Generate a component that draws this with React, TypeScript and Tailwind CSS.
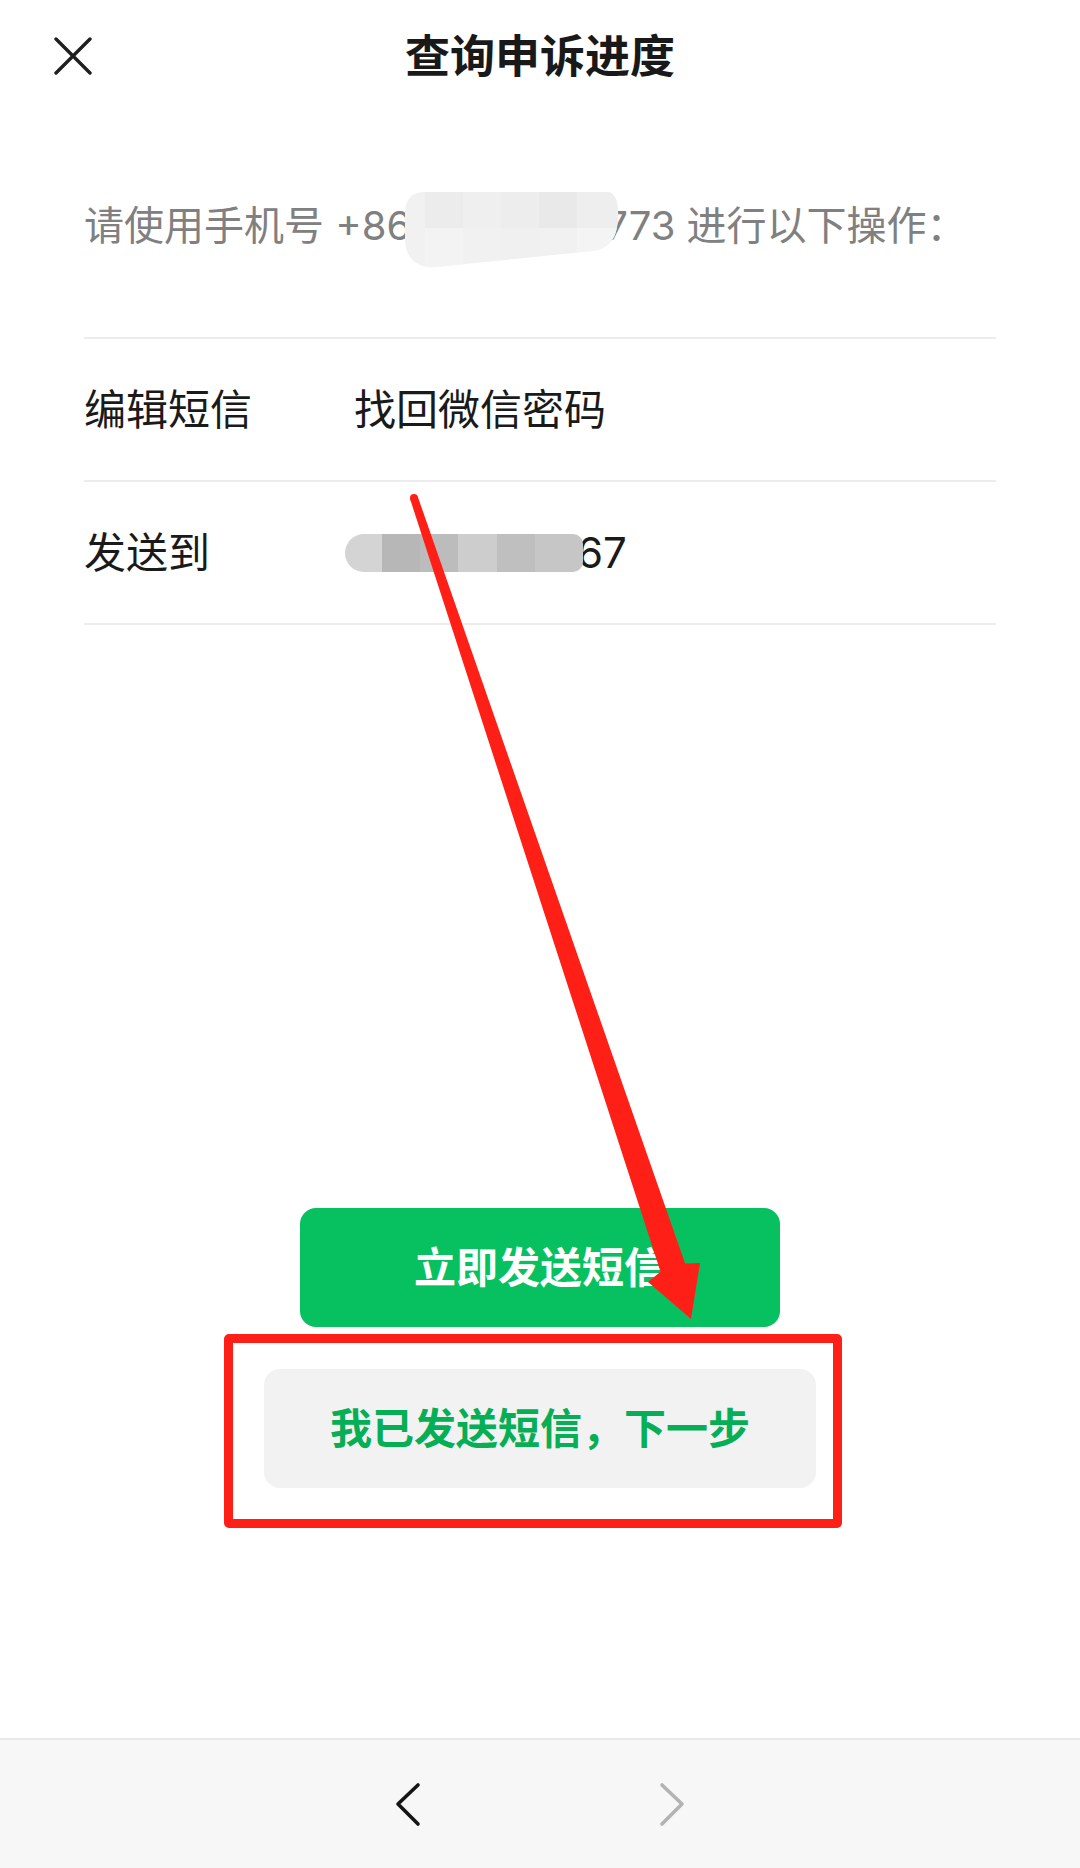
import { ReactNode } from "react";

type RowProps = {
  label: string;
  children: ReactNode;
};

const Row = ({ label, children }: RowProps) => (
  <div className="mx-[84px] flex h-[143px] items-center border-t-2 border-[#ececec] text-[42px] text-[#1a1a1a]">
    <span className="w-[270px] shrink-0">{label}</span>
    {children}
  </div>
);

// pixelated blocks hiding the middle digits
const maskBlocks = [
  { w: "w-[37px]", c: "bg-[#d4d4d4] rounded-l-full" },
  { w: "w-[38px]", c: "bg-[#b7b7b7]" },
  { w: "w-[38px]", c: "bg-[#bcbcbc]" },
  { w: "w-[39px]", c: "bg-[#cdcdcd]" },
  { w: "w-[38px]", c: "bg-[#bfbfbf]" },
  { w: "w-[48px]", c: "bg-[#c6c6c6] rounded-r-[10px]" },
];

const Smudge = () => (
  <svg
    width="216"
    height="82"
    viewBox="0 0 216 82"
    className="relative z-10 -ml-[8px] -mr-[14px] mt-[6px] shrink-0"
  >
    <defs>
      <clipPath id="smudge">
        <path d="M2 27 C2 10 10 4 22 4 L204 4 C212 4 216 14 215 30 C214 50 207 60 190 63 L32 79 C13 81 2 68 2 52 Z" />
      </clipPath>
    </defs>
    <g clipPath="url(#smudge)">
      <rect x="0" y="0" width="216" height="82" fill="#f1f1f1" />
      <rect x="22" y="0" width="38" height="40" fill="#ececec" />
      <rect x="60" y="0" width="38" height="40" fill="#efefef" />
      <rect x="98" y="0" width="38" height="40" fill="#ededed" />
      <rect x="136" y="0" width="38" height="40" fill="#e9e9e9" />
      <rect x="174" y="0" width="42" height="40" fill="#eeeeee" />
      <rect x="22" y="40" width="38" height="42" fill="#f3f3f3" />
      <rect x="98" y="40" width="38" height="42" fill="#f0f0f0" />
      <rect x="174" y="40" width="42" height="42" fill="#f4f4f4" />
    </g>
  </svg>
);

const Chevron = ({ dir, color }: { dir: "left" | "right"; color: string }) => (
  <svg width="26" height="46" viewBox="0 0 26 46">
    <polyline
      points={dir === "left" ? "23,4 3,23 23,43" : "3,4 23,23 3,43"}
      fill="none"
      stroke={color}
      strokeWidth="3.6"
      strokeLinecap="round"
      strokeLinejoin="round"
    />
  </svg>
);

export default function App() {
  return (
    <div className="relative mx-auto flex h-[1868px] w-[1080px] flex-col overflow-hidden bg-white font-['Inter','Noto_Sans_CJK_SC',sans-serif]">
      {/* header */}
      <div className="grid h-[112px] grid-cols-[1fr_auto_1fr] items-center">
        <div className="pl-[54px]">
          <svg width="38" height="38" viewBox="0 0 38 38">
            <path
              d="M2 2 L36 36 M36 2 L2 36"
              stroke="#1f1f1f"
              strokeWidth="3.4"
              strokeLinecap="round"
            />
          </svg>
        </div>
        <h1 className="text-[45px] font-semibold leading-none text-[#191919]">
          查询申诉进度
        </h1>
        <div />
      </div>

      {/* instruction line */}
      <div className="flex h-[225px] items-center px-[84px] pt-[3px] text-[40px] text-[#808080]">
        <span className="whitespace-pre">请使用手机号 +86</span>
        <Smudge />
        <span className="whitespace-pre">773 进行以下操作：</span>
      </div>

      <Row label="编辑短信">
        <span>找回微信密码</span>
      </Row>
      <Row label="发送到">
        <div className="flex items-center">
          <div className="relative z-10 -ml-[9px] flex h-[38px]">
            {maskBlocks.map((b, i) => (
              <div key={i} className={`${b.w} ${b.c} h-full`} />
            ))}
          </div>
          <span className="-ml-[6px]">67</span>
        </div>
      </Row>
      <div className="mx-[84px] h-[2px] bg-[#ececec]" />

      {/* actions */}
      <div className="mt-[583px] flex flex-col items-center">
        <button className="flex h-[119px] w-[480px] items-center justify-center rounded-[16px] bg-[#07c160] text-[42px] font-bold text-white">
          立即发送短信
        </button>
        <button className="mt-[42px] flex h-[119px] w-[552px] items-center justify-center rounded-[16px] bg-[#f2f2f2] text-[42px] font-bold text-[#06ae56]">
          我已发送短信，下一步
        </button>
      </div>

      {/* browser nav */}
      <div className="mt-auto flex h-[130px] items-center justify-center gap-[238px] border-t-2 border-[#e8e8e8] bg-[#f7f7f7]">
        <Chevron dir="left" color="#151515" />
        <Chevron dir="right" color="#b3b3b3" />
      </div>

      {/* annotation: box around the next-step button */}
      <div className="pointer-events-none absolute left-[224px] top-[1334px] h-[194px] w-[618px] rounded-[5px] border-[9px] border-[#fe2016]" />

      {/* annotation: arrow */}
      <svg
        className="pointer-events-none absolute inset-0 z-20"
        width="1080"
        height="1868"
        viewBox="0 0 1080 1868"
      >
        <circle cx="414" cy="498" r="4" fill="#fe2016" />
        <polygon
          points="410.2,499.3 660.5,1271.8 648,1282 691,1319 700,1263 685.1,1263.6 417.8,496.7"
          fill="#fe2016"
        />
      </svg>
    </div>
  );
}
